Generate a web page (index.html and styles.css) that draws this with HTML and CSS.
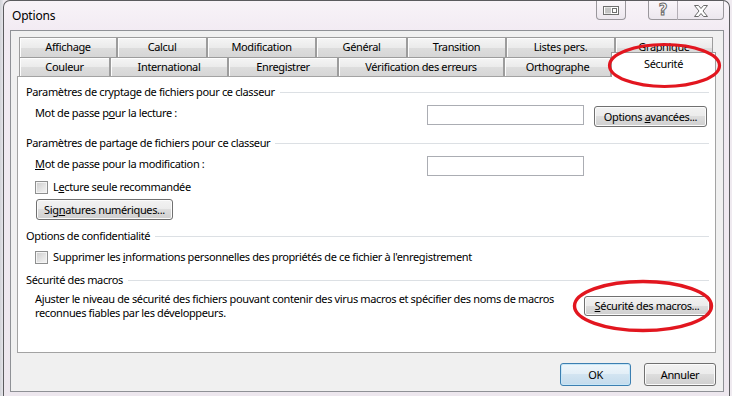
FILE: index.html
```html
<!DOCTYPE html>
<html lang="fr">
<head>
<meta charset="utf-8">
<title>Options</title>
<link rel="stylesheet" href="styles.css">
</head>
<body>
<div class="window">
  <div class="titlebar">
    <span class="title">Options</span>
    <div class="cbtn cbtn-extra">
      <svg width="16" height="9" viewBox="0 0 16 9"><rect x="0.5" y="0.5" width="15" height="8" fill="#fff" stroke="#6f6f6f"/><path d="M3 1.5v6M5 1.5v6M7 1.5v6" stroke="#8a8a8a"/><rect x="9.5" y="2.5" width="4" height="4" fill="#fff" stroke="#6f6f6f"/></svg>
    </div>
    <div class="cbtn-group">
      <div class="cbtn cbtn-help"><span class="qmark">?</span></div>
      <div class="cbtn cbtn-close">
        <svg width="16" height="12" viewBox="0 0 16 12"><path d="M1.5 0.5h4l2.5 3 2.5-3h4l-4.5 5.5 4.5 5.5h-4l-2.5-3-2.5 3h-4l4.5-5.5z" fill="#fff" stroke="#6a6a6a"/></svg>
      </div>
    </div>
  </div>

  <div class="client">
    <div class="tabs">
      <div class="tabrow">
        <div class="tab w98">Affichage</div>
        <div class="tab w90">Calcul</div>
        <div class="tab w109">Modification</div>
        <div class="tab w91">Général</div>
        <div class="tab w99">Transition</div>
        <div class="tab w109">Listes pers.</div>
        <div class="tab w98">Graphique</div>
      </div>
      <div class="tabrow">
        <div class="tab w91">Couleur</div>
        <div class="tab w118">International</div>
        <div class="tab w110">Enregistrer</div>
        <div class="tab w166">Vérification des erreurs</div>
        <div class="tab w107">Orthographe</div>
        <div class="tab tab-active">Sécurité</div>
      </div>
    </div>

    <div class="panel">
      <div class="group-head"><span>Paramètres de cryptage de fichiers pour ce classeur</span><i class="rule"></i></div>
      <div class="field-row">
        <span class="field-label">Mot de passe p<u>o</u>ur la lecture :</span>
        <span class="input"></span>
        <span class="btn btn-adv"><span>Options <u>a</u>vancées...</span></span>
      </div>

      <div class="group-head gh2"><span>Paramètres de partage de fichiers pour ce classeur</span><i class="rule"></i></div>
      <div class="field-row">
        <span class="field-label"><u>M</u>ot de passe pour la modification :</span>
        <span class="input"></span>
      </div>
      <div class="check-row cr1"><span class="checkbox"></span><span>L<u>e</u>cture seule recommandée</span></div>
      <div class="btn-row"><span class="btn btn-sig"><span>Sig<u>n</u>atures numériques...</span></span></div>

      <div class="group-head gh3"><span>Options de confidentialité</span><i class="rule"></i></div>
      <div class="check-row cr2"><span class="checkbox"></span><span>Supprimer les <u>i</u>nformations personnelles des propriétés de ce fichier à l'enregistrement</span></div>

      <div class="group-head gh4"><span>Sécurité des macros</span><i class="rule"></i></div>
      <div class="macro-row">
        <p class="macro-text">Ajuster le niveau de sécurité des fichiers pouvant contenir des virus macros et spécifier des noms de macros<br>reconnues fiables par les développeurs.</p>
        <span class="btn btn-macro"><span><u>S</u>écurité des macros...</span></span>
      </div>
    </div>

    <div class="footer">
      <span class="btn btn-ok"><span>OK</span></span>
      <span class="btn btn-cancel"><span>Annuler</span></span>
    </div>
  </div>
</div>

<svg class="marks" width="732" height="396" viewBox="0 0 732 396">
  <ellipse cx="664.5" cy="65.5" rx="55" ry="21" fill="none" stroke="#e2161f" stroke-width="3.2"/>
  <ellipse cx="643" cy="306" rx="68.5" ry="24.5" fill="none" stroke="#e2161f" stroke-width="3.4"/>
</svg>
</body>
</html>
```
FILE: styles.css
```css
html, body {
  margin: 0;
  padding: 0;
}

body {
  width: 732px;
  height: 396px;
  overflow: hidden;
  position: relative;
  background: linear-gradient(90deg, #d2d3d8 0, #e4e4ea 3px, #efeaf0 3px);
  font-family: "Noto Sans", "Open Sans", sans-serif;
  font-size: 11px;
  letter-spacing: -0.36px;
  color: #000;
}

.window {
  margin-left: 3px;
  width: 727px;
  height: 396px;
  box-sizing: border-box;
  border: 1px solid #5b5b5e;
  border-bottom: none;
  border-radius: 7px 7px 0 0;
  background: linear-gradient(180deg, #f8f3f8 0, #f2ebf3 30px, #ede7ee 100%);
  padding: 0 5px 0 6px;
  display: flex;
  flex-direction: column;
}

/* title bar */
.titlebar {
  height: 29px;
  display: flex;
  align-items: flex-start;
}

.title {
  margin-left: 2px;
  line-height: 29px;
  font-size: 12px;
  letter-spacing: -0.2px;
}

.cbtn {
  height: 19px;
  box-sizing: border-box;
  display: flex;
  align-items: center;
  justify-content: center;
}

.cbtn-extra {
  margin-left: auto;
  margin-right: 22px;
  width: 30px;
  border: 1px solid #9a979c;
  border-top: none;
  border-radius: 0 0 4px 4px;
  background: linear-gradient(#faf6fa, #ece7ee);
}

.cbtn-group {
  display: flex;
  width: 76px;
  height: 19px;
  box-sizing: border-box;
  border: 1px solid #9a979c;
  border-top: none;
  border-radius: 0 0 4px 4px;
  background: linear-gradient(#faf6fa, #ece7ee);
}

.cbtn-help {
  width: 29px;
  border-right: 1px solid #b3aeb5;
}

.cbtn-close {
  flex: 1;
}

.qmark {
  font-family: "DejaVu Sans", sans-serif;
  font-size: 15px;
  font-weight: bold;
  color: #fff;
  -webkit-text-stroke: 1px #6a6a6a;
  line-height: 17px;
}

/* client area */
.client {
  flex: 1;
  margin-bottom: 4px;
  border: 1px solid #8f9196;
  background: #f0f0f0;
  padding: 6px 7px 0 6px;
  display: flex;
  flex-direction: column;
}

/* tabs */
.tabs {
  margin-left: 2px;
  position: relative;
  z-index: 1;
}

.tabrow {
  display: flex;
  height: 20px;
}

.tabrow + .tabrow {
  height: 19px;
}

.tab {
  box-sizing: border-box;
  height: 100%;
  border: 1px solid #9c9c9c;
  border-bottom: none;
  box-shadow: inset 1px 1px 0 #fdfdfd;
  background: linear-gradient(180deg, #f5f5f5 0, #ebebeb 50%, #dddddd 51%, #d6d6d6 100%);
  text-align: center;
  line-height: 18px;
  white-space: nowrap;
}

.w90 { width: 90px; }
.w91 { width: 91px; }
.w98 { width: 98px; }
.w99 { width: 99px; }
.w107 { width: 107px; }
.w109 { width: 109px; }
.w110 { width: 110px; }
.w118 { width: 118px; }
.w166 { width: 166px; }

.tab-active {
  position: relative;
  z-index: 2;
  width: 105px;
  height: 25px;
  margin-top: -5px;
  background: #fff;
  box-shadow: none;
  line-height: 22px;
}

/* panel */
.panel {
  width: 699px;
  height: 277px;
  box-sizing: border-box;
  border: 1px solid #a3a3a3;
  background: #fff;
  padding: 8px 6px 0 8px;
}

.group-head {
  display: flex;
  align-items: center;
  height: 14px;
  line-height: 14px;
  white-space: nowrap;
}

.rule {
  flex: 1;
  height: 1px;
  margin-left: 5px;
  background: #dce0e4;
}

.gh2 { margin-top: 9px; }
.gh3 { margin-top: 9px; }
.gh4 { margin-top: 9px; }

.field-row {
  display: flex;
  align-items: flex-start;
  margin-top: 6px;
  margin-left: 9px;
}

.field-label {
  width: 392px;
  line-height: 14px;
  padding-top: 1px;
  white-space: nowrap;
}

.input {
  width: 157px;
  height: 20px;
  box-sizing: border-box;
  border: 1px solid #abadb3;
  background: #fff;
}

.btn {
  box-sizing: border-box;
  display: inline-flex;
  align-items: center;
  justify-content: center;
  height: 21px;
  border: 1px solid #707070;
  border-radius: 3px;
  box-shadow: inset 0 0 0 1px #fbfbfb;
  background: linear-gradient(180deg, #f2f2f2 0, #ebebeb 50%, #dddddd 50%, #cfcfcf 100%);
  white-space: nowrap;
  line-height: 14px;
}

.btn-adv {
  width: 113px;
  margin-left: 10px;
  margin-top: 1px;
}

.check-row {
  display: flex;
  align-items: center;
  gap: 5px;
  height: 14px;
  margin-left: 9px;
  line-height: 14px;
  white-space: nowrap;
}

.cr1 { margin-top: 4px; }
.cr2 { margin-top: 7px; }

.checkbox {
  width: 13px;
  height: 13px;
  box-sizing: border-box;
  border: 1px solid #8e8f8f;
  box-shadow: inset 0 0 0 1px #f4f4f4;
  background: linear-gradient(135deg, #cbcbcb 0, #e6e6e6 60%, #f4f4f4 100%);
}

.btn-row {
  margin-top: 5px;
  margin-left: 10px;
}

.btn-sig {
  width: 137px;
}

.macro-row {
  display: flex;
  align-items: flex-start;
  margin-top: 5px;
  margin-left: 9px;
}

.macro-text {
  margin: 0;
  flex: 1;
  line-height: 14px;
  white-space: nowrap;
}

.btn-macro {
  width: 126px;
  height: 20px;
  margin-top: 4px;
  margin-right: -1px;
}

/* footer */
.footer {
  display: flex;
  justify-content: flex-end;
  gap: 13px;
  margin-top: 10px;
}

.btn-ok,
.btn-cancel {
  height: 23px;
}

.btn-ok {
  width: 71px;
  border-color: #3c7fb1;
  box-shadow: inset 0 0 0 1px #c7e6f7;
  background: linear-gradient(180deg, #eef6fb 0, #e2eef7 50%, #d2e4f1 50%, #c4dbec 100%);
}

.btn-cancel {
  width: 72px;
}

/* annotation marks drawn over the screenshot */
.marks {
  position: absolute;
  left: 0;
  top: 0;
  pointer-events: none;
  z-index: 5;
}
```
